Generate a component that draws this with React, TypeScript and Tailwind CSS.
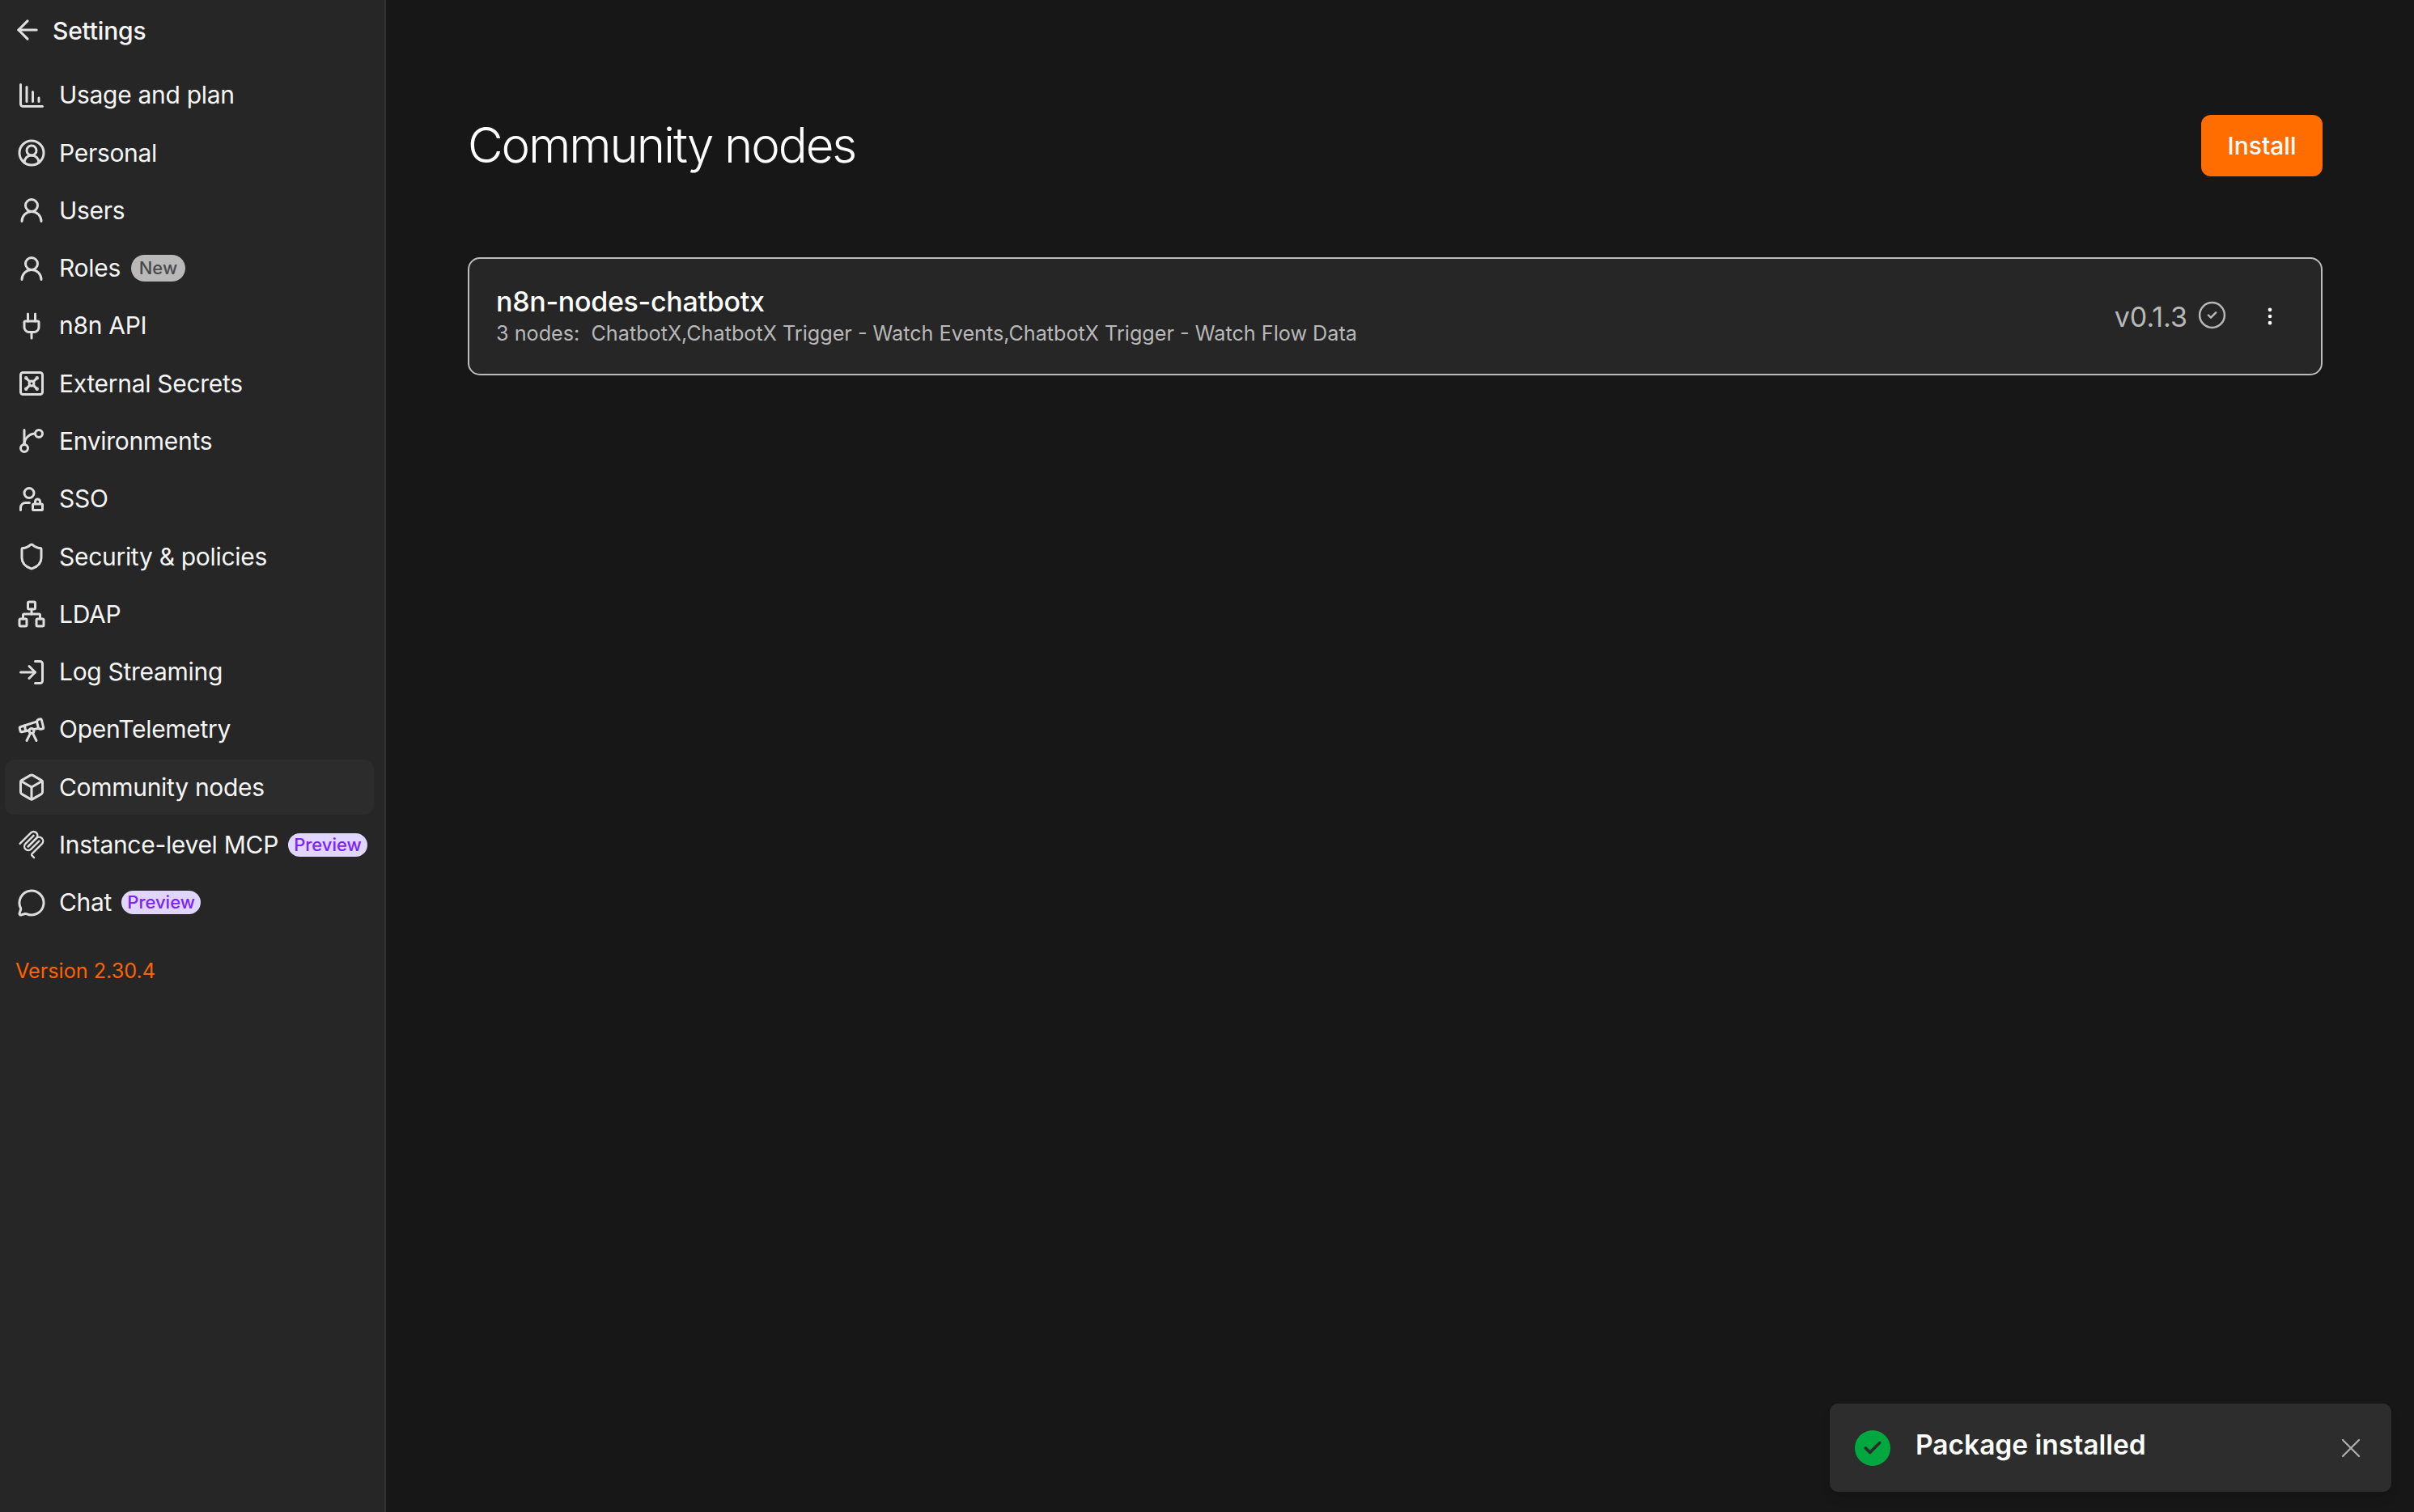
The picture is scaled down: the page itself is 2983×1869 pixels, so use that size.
import {
  ArrowLeft,
  Box,
  ChartColumnDecreasing,
  Check,
  CircleCheck,
  CircleUserRound,
  EllipsisVertical,
  LogIn,
  MessageCircle,
  Network,
  Plug,
  Shield,
  Telescope,
  UserLock,
  UserRound,
  Vault,
  X,
} from 'lucide-react'
import type { ComponentType } from 'react'

function McpIcon({ className }: { className?: string }) {
  return (
    <svg viewBox="0 0 180 180" fill="none" stroke="currentColor" strokeWidth="12" strokeLinecap="round" className={className}>
      <path d="M18 84.8528L85.8822 16.9706C95.2548 7.59798 110.451 7.59798 119.823 16.9706C129.196 26.3431 129.196 41.5391 119.823 50.9117L68.5581 102.177" />
      <path d="M69.2652 101.47L119.823 50.9117C129.196 41.5391 144.392 41.5391 153.765 50.9117L154.118 51.2652C163.49 60.6378 163.49 75.8338 154.118 85.2063L92.7248 146.6C89.6006 149.724 89.6006 154.789 92.7248 157.913L105.331 170.52" />
      <path d="M102.853 33.9411L52.6482 84.1457C43.2756 93.5183 43.2756 108.714 52.6482 118.087C62.0208 127.459 77.2167 127.459 86.5893 118.087L136.794 67.8822" />
    </svg>
  )
}

// the picture's branch icon curves up to the right circle, lucide's current one doesn't
function BranchIcon({ className }: { className?: string }) {
  return (
    <svg viewBox="0 0 24 24" fill="none" stroke="currentColor" strokeWidth="2" strokeLinecap="round" strokeLinejoin="round" className={className}>
      <path d="M6 3v12" />
      <circle cx="18" cy="6" r="3" />
      <circle cx="6" cy="18" r="3" />
      <path d="M15 6a9 9 0 0 0-9 9" />
    </svg>
  )
}

interface NavItem {
  label: string
  icon: ComponentType<{ className?: string }>
  badge?: 'new' | 'preview'
  active?: boolean
}

const navItems: NavItem[] = [
  { label: 'Usage and plan', icon: ChartColumnDecreasing },
  { label: 'Personal', icon: CircleUserRound },
  { label: 'Users', icon: UserRound },
  { label: 'Roles', icon: UserRound, badge: 'new' },
  { label: 'n8n API', icon: Plug },
  { label: 'External Secrets', icon: Vault },
  { label: 'Environments', icon: BranchIcon },
  { label: 'SSO', icon: UserLock },
  { label: 'Security & policies', icon: Shield },
  { label: 'LDAP', icon: Network },
  { label: 'Log Streaming', icon: LogIn },
  { label: 'OpenTelemetry', icon: Telescope },
  { label: 'Community nodes', icon: Box, active: true },
  { label: 'Instance-level MCP', icon: McpIcon, badge: 'preview' },
  { label: 'Chat', icon: MessageCircle, badge: 'preview' },
]

function Badge({ kind }: { kind: 'new' | 'preview' }) {
  if (kind === 'new') {
    return (
      <span className="ml-[13px] flex h-[33px] w-[67px] items-center justify-center rounded-full bg-[#b9b9b9] text-[22px] font-medium text-[#4a4a4a]">
        New
      </span>
    )
  }
  return (
    <span className="ml-[12px] flex h-[29px] w-[98px] items-center justify-center rounded-full bg-[#e0d6ff] text-[22px] font-medium text-[#7a22ff]">
      Preview
    </span>
  )
}

export default function App() {
  return (
    <div className="relative flex h-[1869px] w-[2983px] overflow-hidden bg-[#171717] font-['Inter',sans-serif]">
      <aside className="flex h-full w-[477px] shrink-0 flex-col border-r-2 border-[#333333] bg-[#262626]">
        <div className="flex h-[76px] items-center gap-[12px] pl-[15px] text-[30px] font-medium tracking-[-0.2px] text-[#f5f5f5]">
          <ArrowLeft className="h-[38px] w-[38px] -translate-y-[1px] text-[#e0e0e0]" />
          <span>Settings</span>
        </div>
        <nav className="mt-[8px] flex flex-col gap-[3.7px] pl-[6px] pr-[13px]">
          {navItems.map(item => (
            <div
              key={item.label}
              className={`flex h-[67.6px] items-center rounded-[12px] pl-[15px] ${item.active ? 'bg-[#2c2c2c]' : ''}`}
            >
              <item.icon className="h-[36px] w-[36px] shrink-0 text-[#dedede]" />
              <span className="ml-[16px] text-[30px] tracking-[-0.3px] text-[#f5f5f5]">{item.label}</span>
              {item.badge && <Badge kind={item.badge} />}
            </div>
          ))}
        </nav>
        <p className="mt-[32px] pl-[19px] text-[25.2px] text-[#ff6200]">Version 2.30.4</p>
      </aside>

      <main className="flex-1 pl-[101px] pr-[113px] pt-[142px]">
        <div className="flex items-center justify-between">
          <h1 className="-translate-y-[1px] text-[60px] leading-[76px] font-[350] tracking-[-2.1px] text-white">Community nodes</h1>
          <button className="flex h-[76px] w-[150px] items-center justify-center rounded-[12px] bg-[#ff6d00] text-[30px] font-medium text-white">
            Install
          </button>
        </div>
        <div className="mt-[100px] flex h-[146px] items-center justify-between rounded-[15px] border-2 border-[#bcbcbc] bg-[#262626] pl-[33px] pr-[49px]">
          <div className="flex flex-col pb-[4px]">
            <span className="text-[34px] leading-[45px] font-medium tracking-[-0.3px] text-white">n8n-nodes-chatbotx</span>
            <span className="text-[25.2px] leading-[34px] text-[#b8b8b8]">
              3 nodes:&nbsp; ChatbotX,ChatbotX Trigger - Watch Events,ChatbotX Trigger - Watch Flow Data
            </span>
          </div>
          <div className="flex items-center">
            <span className="text-[34px] text-[#b8b8b8]">v0.1.3</span>
            <CircleCheck className="ml-[12px] h-[37px] w-[37px] -translate-y-[2px] text-[#b8b8b8]" strokeWidth={1.6} />
            <EllipsisVertical className="ml-[39px] h-[28px] w-[28px] text-white" />
          </div>
        </div>
      </main>

      <div className="absolute bottom-[25px] left-[2261px] flex h-[109px] w-[694px] items-center rounded-[10px] bg-[#2d2d2d] pl-[31px] pr-[30px] shadow-lg">
        <span className="flex h-[44px] w-[44px] items-center justify-center rounded-full bg-[#00a83f]">
          <Check className="h-[26px] w-[26px] text-[#2d2d2d]" strokeWidth={3.5} />
        </span>
        <span className="ml-[31px] flex-1 -translate-y-[3px] text-[33.5px] font-semibold text-white">Package installed</span>
        <X className="h-[40px] w-[40px] text-[#b0b0b0]" strokeWidth={1.3} />
      </div>
    </div>
  )
}
